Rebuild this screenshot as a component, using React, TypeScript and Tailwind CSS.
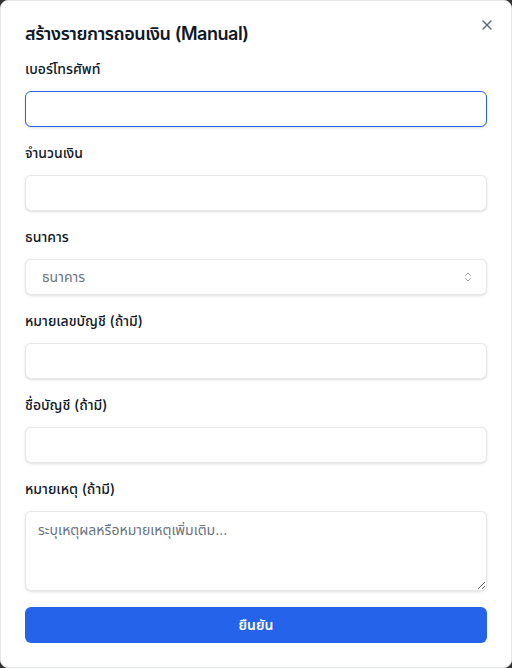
import { X, ChevronsUpDown } from "lucide-react";

const font = { fontFamily: "Inter, 'Noto Sans', 'Noto Sans Thai', sans-serif" };

function Field({ label, children }: { label: string; children: React.ReactNode }) {
  return (
    <div className="flex flex-col gap-3">
      <label className="text-sm font-medium leading-5 text-gray-900">{label}</label>
      {children}
    </div>
  );
}

const base = "h-9 w-full rounded-md border bg-white px-3 text-sm shadow-sm outline-none";
const inputCls = base + " border-gray-200";

export default function App() {
  return (
    <div className="min-h-screen bg-black/80" style={font}>
      <div className="relative h-[668px] w-full rounded-lg border border-gray-200 bg-white p-6">
        <button className="absolute right-4 top-4 text-gray-700 opacity-80">
          <X className="h-4 w-4" strokeWidth={2} />
        </button>
        <h2 className="text-lg font-semibold leading-none tracking-tight text-gray-900">
          สร้างรายการถอนเงิน (Manual)
        </h2>
        <form className="mt-4 flex flex-col gap-4">
          <Field label="เบอร์โทรศัพท์">
            <input className={base + " border-[#2563eb]"} />
          </Field>
          <Field label="จำนวนเงิน">
            <input className={inputCls} />
          </Field>
          <Field label="ธนาคาร">
            <div className="flex h-9 w-full items-center justify-between rounded-md border border-gray-200 bg-white pl-4 pr-3 text-sm shadow-sm">
              <span className="text-gray-500">ธนาคาร</span>
              <ChevronsUpDown className="h-3 w-3 text-gray-400" />
            </div>
          </Field>
          <Field label="หมายเลขบัญชี (ถ้ามี)">
            <input className={inputCls} />
          </Field>
          <Field label="ชื่อบัญชี (ถ้ามี)">
            <input className={inputCls} />
          </Field>
          <Field label="หมายเหตุ (ถ้ามี)">
            <textarea
              className="h-20 w-full rounded-md border border-gray-200 bg-white px-3 py-2 text-sm shadow-sm outline-none placeholder:text-gray-500"
              placeholder="ระบุเหตุผลหรือหมายเหตุเพิ่มเติม..."
            />
          </Field>
          <button
            type="button"
            className="h-9 w-full rounded-md bg-[#2563eb] text-sm font-semibold text-white"
          >
            ยืนยัน
          </button>
        </form>
      </div>
    </div>
  );
}
